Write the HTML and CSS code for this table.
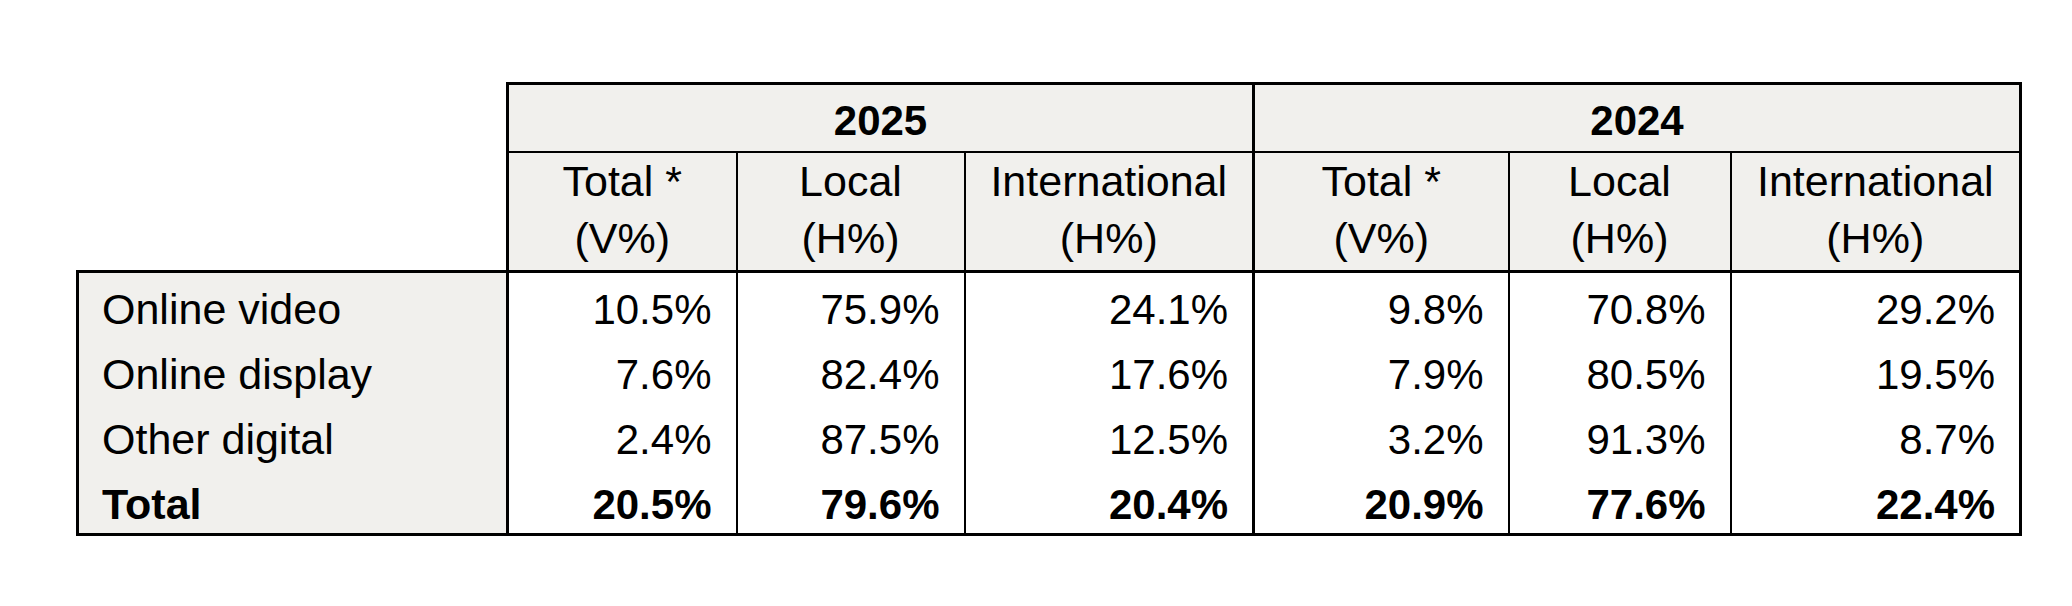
FILE: index.html
```html
<!DOCTYPE html>
<html lang="en">
<head>
<meta charset="utf-8">
<title>Digital advertising share</title>
<link rel="stylesheet" href="styles.css">
</head>
<body>
<main class="page">
  <table class="stats">
    <colgroup>
      <col class="c-label">
      <col class="c-tot">
      <col class="c-loc">
      <col class="c-int">
      <col class="c-tot2">
      <col class="c-loc2">
      <col class="c-int2">
    </colgroup>
    <thead>
      <tr class="year-row">
        <th class="corner" rowspan="2"></th>
        <th class="year" colspan="3">2025</th>
        <th class="year" colspan="3">2024</th>
      </tr>
      <tr class="sub-row">
        <th class="g-start">Total *<br>(V%)</th>
        <th>Local<br>(H%)</th>
        <th class="g-end">International<br>(H%)</th>
        <th class="g-start">Total *<br>(V%)</th>
        <th>Local<br>(H%)</th>
        <th class="g-end">International<br>(H%)</th>
      </tr>
    </thead>
    <tbody>
      <tr class="first">
        <th class="label">Online video</th>
        <td class="g-start">10.5%</td><td>75.9%</td><td class="g-end">24.1%</td>
        <td class="g-start">9.8%</td><td>70.8%</td><td class="g-end">29.2%</td>
      </tr>
      <tr>
        <th class="label">Online display</th>
        <td class="g-start">7.6%</td><td>82.4%</td><td class="g-end">17.6%</td>
        <td class="g-start">7.9%</td><td>80.5%</td><td class="g-end">19.5%</td>
      </tr>
      <tr>
        <th class="label">Other digital</th>
        <td class="g-start">2.4%</td><td>87.5%</td><td class="g-end">12.5%</td>
        <td class="g-start">3.2%</td><td>91.3%</td><td class="g-end">8.7%</td>
      </tr>
      <tr class="total">
        <th class="label">Total</th>
        <td class="g-start">20.5%</td><td>79.6%</td><td class="g-end">20.4%</td>
        <td class="g-start">20.9%</td><td>77.6%</td><td class="g-end">22.4%</td>
      </tr>
    </tbody>
  </table>
</main>
</body>
</html>
```

FILE: styles.css
```css
html, body {
  margin: 0;
  padding: 0;
  background: #ffffff;
}

.page {
  padding: 82px 0 0 76px;
  font-family: "Liberation Sans", Arial, sans-serif;
  color: #000000;
}

.stats {
  border-collapse: collapse;
  table-layout: fixed;
  width: 1943px;
  font-size: 42px;
}

.c-label { width: 430px; }
.c-tot   { width: 229px; }
.c-loc   { width: 228px; }
.c-int   { width: 289px; }
.c-tot2  { width: 255px; }
.c-loc2  { width: 222px; }
.c-int2  { width: 290px; }

.stats th,
.stats td {
  padding: 0;
  white-space: nowrap;
}

.corner {
  border: none;
  background: #ffffff;
}

.year {
  background: #f1f0ed;
  font-weight: 700;
  text-align: center;
  line-height: 60px;
  padding-top: 6px !important;
  border-top: 3px solid #000;
  border-left: 3px solid #000;
  border-right: 3px solid #000;
  border-bottom: 2px solid #000;
}

.sub-row th {
  background: #f1f0ed;
  font-weight: 400;
  font-size: 43px;
  text-align: center;
  line-height: 57px;
  padding-bottom: 3px;
  border-left: 2px solid #000;
  border-right: 2px solid #000;
  border-bottom: 3px solid #000;
}

.stats .g-start { border-left: 3px solid #000; }
.stats .g-end { border-right: 3px solid #000; }

.label {
  background: #f1f0ed;
  font-weight: 400;
  font-size: 43px;
  text-align: left;
  line-height: 57px;
  padding: 8px 0 0 23px !important;
  border-left: 3px solid #000;
  border-right: 3px solid #000;
}

.first .label { border-top: 3px solid #000; }

tbody td {
  text-align: right;
  line-height: 57px;
  padding: 8px 24px 0 0 !important;
  border-left: 2px solid #000;
  border-right: 2px solid #000;
}

.total th,
.total td {
  font-weight: 700;
  border-bottom: 3px solid #000;
}
```
